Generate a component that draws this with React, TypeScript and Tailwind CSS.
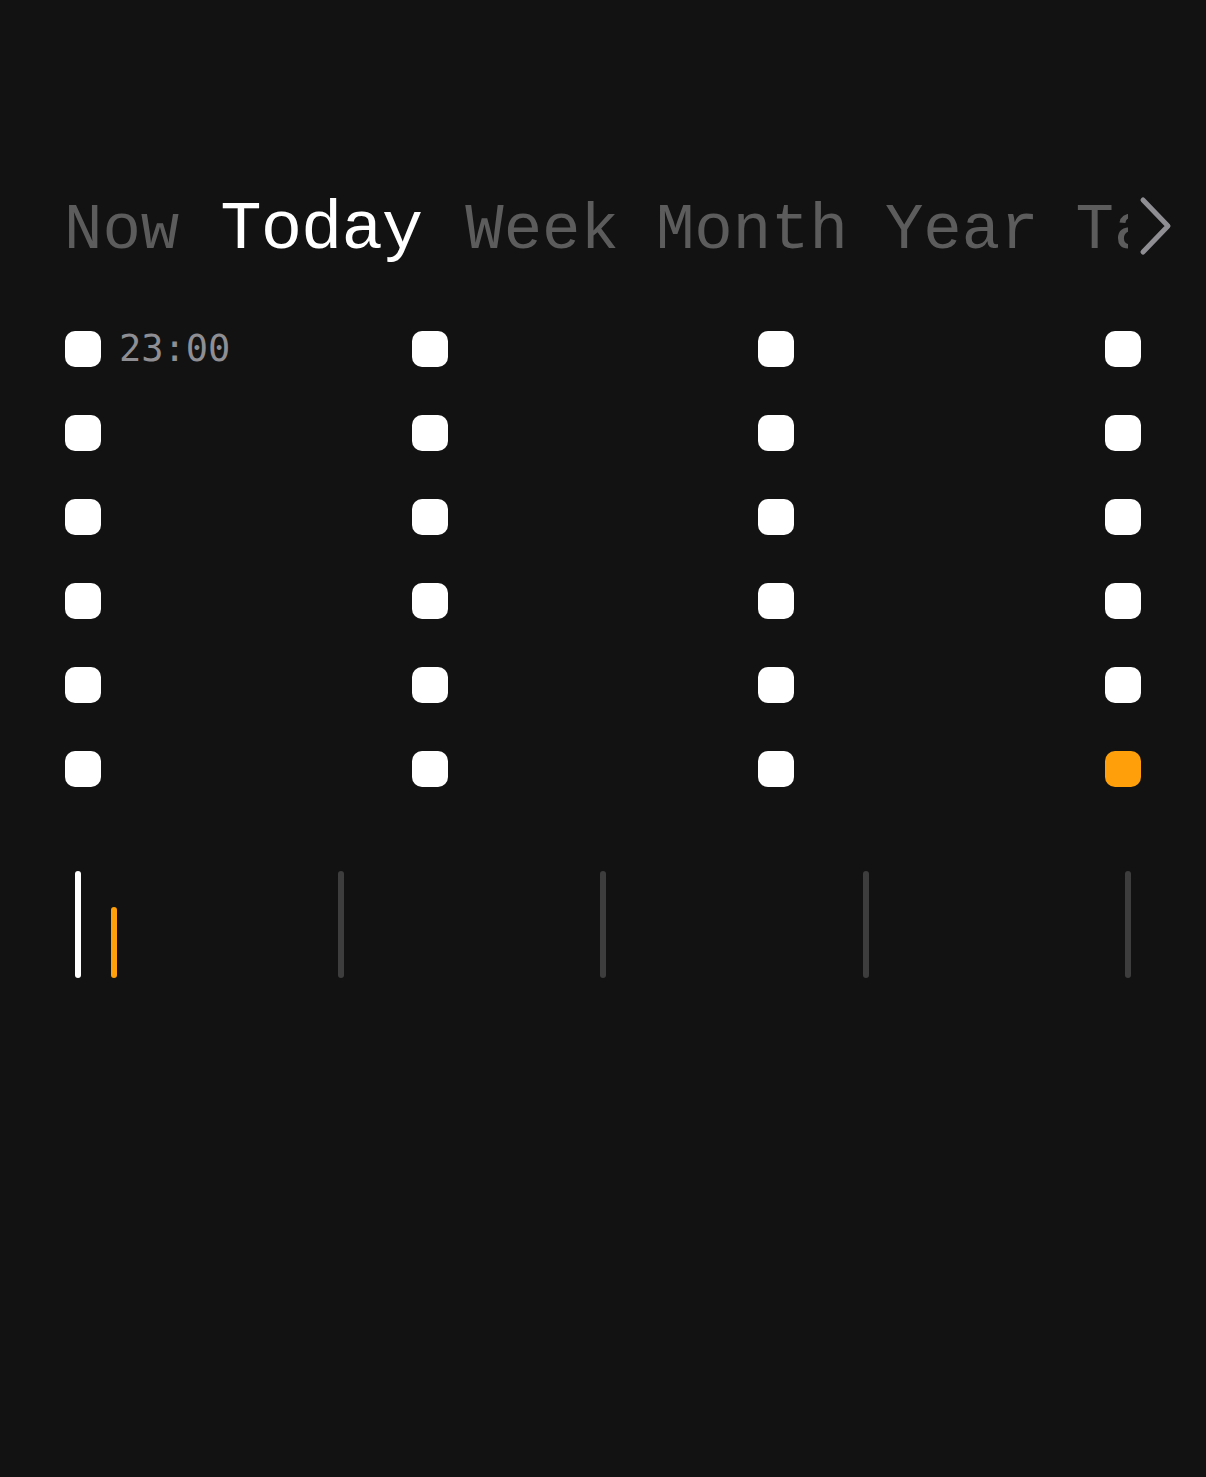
import React from 'react'

const tabs = ['Now', 'Today', 'Week', 'Month', 'Year', 'Tags']

const Square = ({ orange }: { orange?: boolean }) => (
    <div className={orange ? 'w-9 h-9 rounded-[10px] bg-[#ff9f0a]' : 'w-9 h-9 rounded-[10px] bg-white'}></div>
)

const App = () => {
    const rows = [0, 1, 2, 3, 4, 5]
    return (
        <div className="min-h-[1477px] w-full bg-[#121212] pt-[179px]">
            {/* tab strip */}
            <div className="flex items-center pl-[64px] h-[90px]">
                <div className="flex items-baseline gap-[37px] w-[1064px] overflow-hidden whitespace-nowrap font-['Liberation_Mono',monospace] h-[90px]">
                    {tabs.map((t) => (
                        <span
                            key={t}
                            className={
                                t === 'Today'
                                    ? 'text-[69px] tracking-[-1px] text-white ml-[4px] mr-[6px]'
                                    : 'text-[64px] text-[#5c5c5c]'
                            }
                        >
                            {t}
                        </span>
                    ))}
                </div>
                <svg width="36" height="60" viewBox="0 0 36 60" className="ml-[10px] mt-[4px]">
                    <polyline points="5,4 30,30 5,56" fill="none" stroke="#8e8e93" strokeWidth="5" strokeLinecap="round" strokeLinejoin="round" />
                </svg>
            </div>

            {/* grid of squares */}
            <div className="mt-[61px] ml-[65px] w-[1076px] grid grid-cols-[repeat(3,1fr)_36px] gap-y-[48px]">
                {rows.map((r) =>
                    [0, 1, 2, 3].map((c) => (
                        <div key={`${r}-${c}`} className="flex items-center gap-[18px]">
                            <Square orange={r === 5 && c === 3} />
                            {r === 0 && c === 0 && (
                                <span className="text-[37px] leading-none text-[#8e8e93] font-['DejaVu_Sans_Mono',monospace]">23:00</span>
                            )}
                        </div>
                    ))
                )}
            </div>

            {/* ticks */}
            <div className="mt-[84px] ml-[75px] w-[1056px] grid grid-cols-[repeat(4,1fr)_6px] items-end h-[107px]">
                <div className="flex items-end gap-[30px] h-full">
                    <div className="w-[6px] h-[107px] rounded-full bg-white"></div>
                    <div className="w-[6px] h-[71px] rounded-full bg-[#ff9f0a]"></div>
                </div>
                <div className="w-[6px] h-[107px] rounded-full bg-[#3d3d3d]"></div>
                <div className="w-[6px] h-[107px] rounded-full bg-[#3d3d3d]"></div>
                <div className="w-[6px] h-[107px] rounded-full bg-[#3d3d3d]"></div>
                <div className="w-[6px] h-[107px] rounded-full bg-[#3d3d3d]"></div>
            </div>
        </div>
    )
}

export default App
